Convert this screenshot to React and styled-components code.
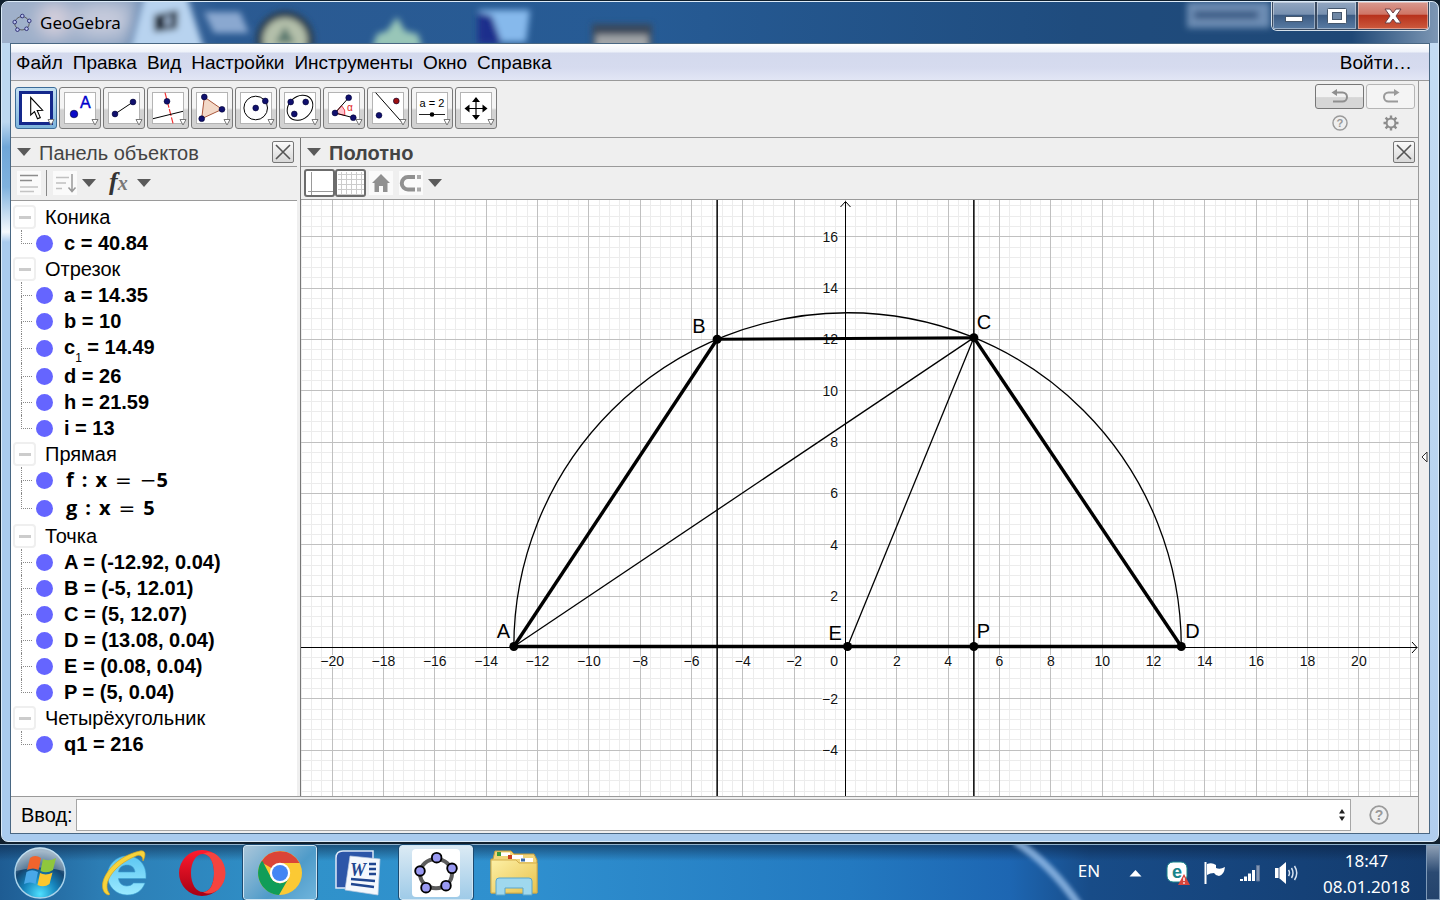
import React from "react";
import styled, { createGlobalStyle } from "styled-components";

const UNIT = 25.67;
const ORIGIN_X = 544.5;
const ORIGIN_Y = 447.5;
const CANVAS_W = 1117;
const CANVAS_H = 596;

const px = (x) => ORIGIN_X + x * UNIT;
const py = (y) => ORIGIN_Y - y * UNIT;
const crisp = (v) => Math.floor(v) + 0.5;

const range = (from, to, step) => {
  const out = [];
  for (let i = Math.ceil(from / step); i * step <= to; i++) out.push(i);
  return out;
};

const menus = ["Файл", "Правка", "Вид", "Настройки", "Инструменты", "Окно", "Справка"];

const groups = [
  { name: "Коника", items: [{ text: "c = 40.84" }] },
  {
    name: "Отрезок",
    items: [
      { text: "a = 14.35" },
      { text: "b = 10" },
      { text: "c", sub: "1", rest: " = 14.49", height: 29 },
      { text: "d = 26" },
      { text: "h = 21.59" },
      { text: "i = 13" },
    ],
  },
  {
    name: "Прямая",
    items: [
      { line: "f", sign: "−" },
      { line: "g", height: 30 },
    ],
  },
  {
    name: "Точка",
    items: [
      { text: "A = (-12.92, 0.04)" },
      { text: "B = (-5, 12.01)" },
      { text: "C = (5, 12.07)" },
      { text: "D = (13.08, 0.04)" },
      { text: "E = (0.08, 0.04)" },
      { text: "P = (5, 0.04)" },
    ],
  },
  { name: "Четырёхугольник", items: [{ text: "q1 = 216" }] },
];

const points = {
  A: { x: -12.92, y: 0.04, dx: -17, dy: -8 },
  B: { x: -5, y: 12.01, dx: -25, dy: -6 },
  C: { x: 5, y: 12.07, dx: 3, dy: -9 },
  D: { x: 13.08, y: 0.04, dx: 4, dy: -8 },
  E: { x: 0.08, y: 0.04, dx: -19, dy: -6 },
  P: { x: 5, y: 0.04, dx: 3, dy: -8 },
};

const Segment = ({ from, to, width }) => (
  <line
    x1={px(points[from].x)}
    y1={py(points[from].y)}
    x2={px(points[to].x)}
    y2={py(points[to].y)}
    stroke="#000"
    strokeWidth={width}
  />
);

const label = (n) => (n < 0 ? `−${-n}` : `${n}`);

const Graph = () => {
  const left = -ORIGIN_X / UNIT;
  const right = (CANVAS_W - ORIGIN_X) / UNIT;
  const bottom = (ORIGIN_Y - CANVAS_H) / UNIT;
  const top = ORIGIN_Y / UNIT;
  const radius = 13 * UNIT;
  const e = points.E;

  return (
    <Canvas viewBox={`0 0 ${CANVAS_W} ${CANVAS_H}`} preserveAspectRatio="xMidYMid slice">
      <g stroke="#ececec">
        {range(left, right, 0.4).map((i) => (
          <line key={`v${i}`} x1={crisp(px(i * 0.4))} x2={crisp(px(i * 0.4))} y1="0" y2={CANVAS_H} />
        ))}
        {range(bottom, top, 0.4).map((i) => (
          <line key={`h${i}`} y1={crisp(py(i * 0.4))} y2={crisp(py(i * 0.4))} x1="0" x2={CANVAS_W} />
        ))}
      </g>
      <g stroke="#c0c0c0">
        {range(left, right, 2).map((i) => (
          <line key={`v${i}`} x1={crisp(px(i * 2))} x2={crisp(px(i * 2))} y1="0" y2={CANVAS_H} />
        ))}
        {range(bottom, top, 2).map((i) => (
          <line key={`h${i}`} y1={crisp(py(i * 2))} y2={crisp(py(i * 2))} x1="0" x2={CANVAS_W} />
        ))}
      </g>
      <g stroke="#000" fill="none">
        <path d={`M0 ${ORIGIN_Y}H1116M1111 442l5 5.500l-5 5.500`} />
        <path d={`M${ORIGIN_X} 596V2M539.500 7l5 -5.500l5 5.500`} />
      </g>
      <g fontSize="14" fill="#111" stroke="#fff" strokeWidth="2" paintOrder="stroke">
        {range(-20, 20, 2).filter((i) => i !== 0).map((i) => (
          <text key={i} x={px(i * 2)} y="466" textAnchor="middle">{label(i * 2)}</text>
        ))}
        {[-4, -2, 2, 4, 6, 8, 10, 12, 14, 16].map((n) => (
          <text key={n} x="537" y={py(n) + 5} textAnchor="end">{label(n)}</text>
        ))}
        <text x="537" y="466" textAnchor="end">0</text>
      </g>
      <path d={`M${px(-5)} 0V596M${px(5)} 0V596`} stroke="#111" strokeWidth="1.6" />
      <path
        d={`M${px(e.x) - radius} ${py(e.y)}A${radius} ${radius} 0 0 1 ${px(e.x) + radius} ${py(e.y)}`}
        fill="none"
        stroke="#000"
        strokeWidth="1.3"
      />
      <Segment from="A" to="C" width="1.3" />
      <Segment from="E" to="C" width="1.3" />
      <Segment from="A" to="B" width="3.4" />
      <Segment from="B" to="C" width="3" />
      <Segment from="C" to="D" width="3.4" />
      <Segment from="A" to="D" width="3.4" />
      {Object.entries(points).map(([name, p]) => (
        <g key={name}>
          <circle cx={px(p.x)} cy={py(p.y)} r="4.500" />
          <text x={px(p.x) + p.dx} y={py(p.y) + p.dy} fontSize="20">{name}</text>
        </g>
      ))}
    </Canvas>
  );
};

const Dot = ({ x, y, r = 2.9, fill = "#10106e" }) => (
  <circle cx={x} cy={y} r={r} fill={fill} stroke="#000030" strokeWidth="0.6" />
);

// drawings for the tool buttons, in the 42px square of the button
const tools = [
  {
    name: "Перемещать",
    icon: <path d="M15.700 10.500V28l3.800-3.400 3 7.200 2.800-1.200-3.100-7.100 5.400-.3z" fill="#fff" stroke="#000" strokeWidth="1.1" />,
  },
  {
    name: "Точка",
    icon: (
      <>
        <Dot x={15} y={27} r={3.8} fill="#0a0ac8" />
        <text x="21" y="21" fontSize="16" fill="#0000cc" stroke="#0000cc" strokeWidth="0.4">A</text>
      </>
    ),
  },
  {
    name: "Отрезок",
    icon: (
      <>
        <path d="M12 27L30 15" stroke="#000" />
        <Dot x={12} y={27} />
        <Dot x={30} y={15} />
      </>
    ),
  },
  {
    name: "Перпендикуляр",
    icon: (
      <>
        <path d="M18 5.700L26 36.300" stroke="#f03030" strokeWidth="1.2" strokeDasharray="7 1.500" />
        <path d="M6 31.700L36 24.300" stroke="#000" />
        <Dot x={20} y={14.3} />
      </>
    ),
  },
  {
    name: "Многоугольник",
    icon: (
      <>
        <path d="M13.300 10L31 22.300 10.700 31.700z" fill="#f3d9c8" stroke="#a8553a" />
        <Dot x={13.3} y={10} />
        <Dot x={31} y={22.3} />
        <Dot x={10.7} y={31.7} />
      </>
    ),
  },
  {
    name: "Окружность",
    icon: (
      <>
        <circle cx="20.700" cy="21" r="11.800" fill="none" stroke="#000" />
        <Dot x={20.7} y={21} />
        <Dot x={30.3} y={14} />
      </>
    ),
  },
  {
    name: "Эллипс",
    icon: (
      <>
        <ellipse cx="21" cy="20.700" rx="14" ry="11.200" transform="rotate(-42 21 20.700)" fill="none" stroke="#000" />
        <Dot x={11.7} y={15} />
        <Dot x={26.7} y={15} />
        <Dot x={15.3} y={27} />
      </>
    ),
  },
  {
    name: "Угол",
    icon: (
      <>
        <path d="M12 26L18.500 18.700A10 10 0 0 1 21.800 28.400z" fill="#ffc4cc" stroke="#f04050" />
        <path d="M25.700 10.700L12 26L30.300 30.700" fill="none" stroke="#000" />
        <text x="24" y="24" fontSize="10" fill="#e02020">α</text>
        <Dot x={12} y={26} />
        <Dot x={25.7} y={10.7} />
        <Dot x={30.3} y={30.7} />
      </>
    ),
  },
  {
    name: "Отражение",
    icon: (
      <>
        <path d="M8.700 5.700L36 36.500" stroke="#000" />
        <Dot x={12} y={28.3} />
        <Dot x={29.3} y={14} fill="#9c1010" />
      </>
    ),
  },
  {
    name: "Ползунок",
    icon: (
      <>
        <text x="21" y="20" fontSize="11" textAnchor="middle">a = 2</text>
        <path d="M8 27.500H34" stroke="#222" />
        <circle cx="21" cy="27.500" r="2.300" />
      </>
    ),
  },
  {
    name: "Полотно",
    icon: (
      <>
        <path d="M21 10l-4 5h8zM21 33l-4-5h8zM9.500 21.500l5-4v8zM32.500 21.500l-5-4v8z" />
        <path d="M21 14V29M13 21.500H29" stroke="#000" strokeWidth="1.2" />
      </>
    ),
  },
];

const ring = [[17, 4], [28.5, 12], [24, 25], [9, 26.5], [4.5, 14]];

const GeoLogo = ({ size, thin }) => (
  <svg width={size} height={size} viewBox="0 0 33 31">
    <ellipse cx="16.500" cy="16" rx="12" ry="11" fill="none" stroke="#5c5c5c" strokeWidth={thin ? 1.6 : 3} />
    {ring.map(([x, y]) => (
      <circle
        key={x}
        cx={x}
        cy={y}
        r={thin ? 3 : 3.6}
        fill={thin ? "#b9c2ee" : "#9999f2"}
        stroke={thin ? "#20206a" : "#000"}
        strokeWidth="1.4"
      />
    ))}
  </svg>
);

const Down = () => (
  <svg width="14" height="8" viewBox="0 0 14 8">
    <path d="M0 0h14L7 8z" fill="#5a5a5a" />
  </svg>
);

const Cross = () => (
  <svg width="20" height="20" viewBox="0 0 20 20">
    <path d="M3 3L17 17M17 3L3 17" stroke="#555" strokeWidth="1.6" />
  </svg>
);

const Help = ({ size }) => (
  <svg width={size} height={size} viewBox="0 0 20 20">
    <circle cx="10" cy="10" r="8.800" fill="none" stroke="#9a9a9a" strokeWidth="1.800" />
    <text x="10" y="15" fontSize="14" fontWeight="bold" fill="#9a9a9a" textAnchor="middle">?</text>
  </svg>
);

const Gear = () => (
  <svg width="16" height="16" viewBox="0 0 16 16">
    <circle cx="8" cy="8" r="4.400" fill="none" stroke="#8c8c8c" strokeWidth="2" />
    <g stroke="#8c8c8c" strokeWidth="2.400">
      <path d="M8 3.500V.500M8 12.500v3M3.500 8h-3M12.500 8h3M4.800 4.800L2.600 2.600M11.200 11.200l2.200 2.200M4.800 11.200l-2.200 2.200M11.200 4.800l2.200-2.200" />
    </g>
  </svg>
);

const TitleBackdrop = () => (
  <Backdrop>
    <defs>
      <filter id="soft" x="-30%" y="-30%" width="160%" height="160%">
        <feGaussianBlur stdDeviation="3" />
      </filter>
      <filter id="softer" x="-50%" y="-50%" width="200%" height="200%">
        <feGaussianBlur stdDeviation="8" />
      </filter>
    </defs>
    <g filter="url(#softer)">
      <path d="M-20 -10H142L128 50H-20z" fill="#9fb0ca" />
      <circle cx="52" cy="18" r="16" fill="#d4cfdc" />
      <ellipse cx="100" cy="18" rx="28" ry="15" fill="#c6cbdc" />
    </g>
    <g filter="url(#soft)">
      <path d="M143 -8H184L203 50H128z" fill="#b8d3ef" />
      <path d="M152 13L176 8L175 27L152 30z" fill="#13202e" />
      <path d="M163 14l6-1v11l-6 1z" fill="#9db4d0" />
      <path d="M202 10L238 10L247 31H212z" fill="#8aa8d0" />
      <circle cx="283" cy="38" r="29" fill="#2b3d4d" />
      <circle cx="283" cy="38" r="22" fill="#b4c0aa" />
      <path d="M283 24l10 17h-20z" fill="#5c7a70" />
      <path d="M370 46l5-14 10-3 10-14 8 14 13 3 4 14z" fill="#98c6b8" />
      <path d="M476 8H528L524 40H486z" fill="#86b9ec" />
      <path d="M476 10l14 4 10 28h-24z" fill="#1e2f8c" />
      <path d="M590 22H650V50H590z" fill="#3a4a5c" />
      <path d="M594 33H646V50H594z" fill="#a0a4a8" />
    </g>
    <svg x="100%" overflow="visible">
      <g filter="url(#soft)">
        <path d="M-251 0H-168V26H-251z" fill="#6d8db4" />
        <path d="M-244 9H-180V17H-244z" fill="#3a5a84" />
      </g>
    </svg>
  </Backdrop>
);

const App = () => {
  return (
    <Desktop>
      <GlobalStyle />
      <Frame>
        <TitleBackdrop />
        <TitleBar>
          <GeoLogo size={20} thin />
          <Title>GeoGebra</Title>
          <WindowButtons>
            <WindowButton $width={44} aria-label="Свернуть">
              <svg width="18" height="12"><rect x="0.500" y="6.500" width="17" height="5" fill="#fff" stroke="#44566c" /></svg>
            </WindowButton>
            <WindowButton $width={41} aria-label="Развернуть">
              <svg width="20" height="16">
                <rect x="0.500" y="0.500" width="19" height="15" rx="1" fill="#fff" stroke="#44566c" />
                <rect x="5.500" y="4.500" width="9" height="7" fill="#6f87a4" stroke="#44566c" />
              </svg>
            </WindowButton>
            <WindowButton $width={72} $close aria-label="Закрыть">
              <svg width="18" height="16" viewBox="0 0 18 16">
                <path d="M1 1h5l3 4 3-4h5l-5 7 5 7h-5l-3-4-3 4H1l5-7z" fill="#fff" stroke="#6a4048" />
              </svg>
            </WindowButton>
          </WindowButtons>
        </TitleBar>
        <Client>
          <MenuBar>
            {menus.map((m) => (
              <MenuItem key={m}>{m}</MenuItem>
            ))}
            <SignIn>Войти…</SignIn>
          </MenuBar>
          <Body>
            <Main>
              <Toolbar>
                {tools.map((tool, i) => (
                  <ToolButton key={tool.name} $active={i === 0} aria-label={tool.name}>
                    <svg width="40" height="40" viewBox="1 1 40 40">
                      {i === 0 ? (
                        <rect x="5.500" y="5.500" width="31" height="31" fill="#fff" stroke="#14288c" strokeWidth="3" />
                      ) : (
                        <rect x="5.500" y="5.500" width="31" height="31" fill="#fff" stroke="#b4b4b4" />
                      )}
                      {tool.icon}
                      <path d="M33 32.500h6L36 38z" fill="#fff" stroke="#777" />
                    </svg>
                  </ToolButton>
                ))}
                <Corner>
                  <UndoButton aria-label="Отменить">
                    <svg width="18" height="15" viewBox="0 0 18 15">
                      <path d="M5 3.500h6.500a4 4 0 0 1 0 9H2" fill="none" stroke="#8e8e8e" strokeWidth="2" />
                      <path d="M6 0v7L0.500 3.500z" fill="#8e8e8e" />
                    </svg>
                  </UndoButton>
                  <UndoButton disabled aria-label="Повторить">
                    <svg width="18" height="15" viewBox="0 0 18 15">
                      <path d="M13 3.500H6.500a4 4 0 0 0 0 9H16" fill="none" stroke="#9a9a9a" strokeWidth="2" />
                      <path d="M12 0v7l5.500-3.500z" fill="#9a9a9a" />
                    </svg>
                  </UndoButton>
                  <PlainButton aria-label="Помощь"><Help size={16} /></PlainButton>
                  <PlainButton aria-label="Параметры"><Gear /></PlainButton>
                </Corner>
              </Toolbar>
              <Panels>
                <ObjectPanel>
                  <PanelHeader>
                    <Down />
                    <PanelTitle>Панель объектов</PanelTitle>
                    <CloseButton aria-label="Закрыть панель"><Cross /></CloseButton>
                  </PanelHeader>
                  <AlgebraBar>
                    <PlainButton aria-label="Вспомогательные объекты">
                      <svg width="24" height="24">
                        <rect width="24" height="24" fill="#fafafa" />
                        <path d="M3 4.500H21M3 9.500H15" stroke="#8c8c8c" strokeWidth="1.500" />
                        <path d="M3 16H21M3 20.500H17" stroke="#c4c4c4" strokeWidth="1.500" />
                      </svg>
                    </PlainButton>
                    <Separator />
                    <PlainButton aria-label="Сортировка">
                      <svg width="24" height="24">
                        <rect width="24" height="24" fill="#fafafa" />
                        <path d="M3 6.500H16M3 12H13M3 17.500H9" stroke="#c0c0c0" strokeWidth="1.500" />
                        <path d="M19 3V20M15.500 16.500L19 20.500L22.500 16.500" fill="none" stroke="#999" strokeWidth="1.500" />
                      </svg>
                    </PlainButton>
                    <Down />
                    <Fx>f<small>x</small></Fx>
                    <Down />
                  </AlgebraBar>
                  <Tree>
                    {groups.map((group) => (
                      <li key={group.name}>
                        <GroupRow>
                          <Toggle aria-label={`Свернуть ${group.name}`} />
                          {group.name}
                        </GroupRow>
                        <ul>
                          {group.items.map((item, i) => (
                            <Item key={i} $height={item.height}>
                              <Branch $last={i === group.items.length - 1} />
                              <Marble aria-label="Показать или скрыть" />
                              {item.line ? (
                                <Formula>
                                  <span>{item.line}</span>
                                  <span>:</span>
                                  <span>x</span>
                                  <Operator>=</Operator>
                                  <span>
                                    {item.sign && <Operator>{item.sign}</Operator>}5
                                  </span>
                                </Formula>
                              ) : (
                                <Value>
                                  {item.text}
                                  {item.sub && <sub>{item.sub}</sub>}
                                  {item.rest}
                                </Value>
                              )}
                            </Item>
                          ))}
                        </ul>
                      </li>
                    ))}
                  </Tree>
                </ObjectPanel>
                <GraphPanel>
                  <PanelHeader>
                    <Down />
                    <PanelTitle $bold>Полотно</PanelTitle>
                    <CloseButton aria-label="Закрыть полотно"><Cross /></CloseButton>
                  </PanelHeader>
                  <GraphBar>
                    <ViewButton aria-label="Оси">
                      <svg width="29" height="25"><path d="M5.500 1V24M2 20.500H27" stroke="#999" /></svg>
                    </ViewButton>
                    <ViewButton aria-label="Сетка">
                      <svg width="29" height="25">
                        <path d="M4.500 1V24M9.500 1V24M14.500 1V24M19.500 1V24M24.500 1V24M1 3.500H28M1 8.500H28M1 13.500H28M1 18.500H28M1 23.500H28" stroke="#ccc" />
                      </svg>
                    </ViewButton>
                    <HomeButton aria-label="Стандартный вид">
                      <svg width="24" height="24">
                        <rect width="24" height="24" fill="#fafafa" />
                        <path d="M12 3L21 12H18.500V21H14V15H10V21H5.500V12H3z" fill="#909090" />
                      </svg>
                    </HomeButton>
                    <PlainButton aria-label="Привязка">
                      <svg width="24" height="24">
                        <rect width="24" height="24" fill="#fafafa" />
                        <path d="M16 6H9a6 6 0 0 0 0 12.500H16" fill="none" stroke="#909090" strokeWidth="4" />
                        <path d="M18 4h4v4h-4zM18 16.500h4v4h-4z" fill="#aaa" />
                      </svg>
                    </PlainButton>
                    <Down />
                  </GraphBar>
                  <Graph />
                </GraphPanel>
              </Panels>
              <InputBar>
                <label htmlFor="command">Ввод:</label>
                <Field>
                  <input id="command" type="text" />
                  <PlainButton aria-label="История ввода">
                    <svg width="6" height="14"><path d="M0 5.500L3 1l3 4.500zM0 8.500h6L3 13z" fill="#222" /></svg>
                  </PlainButton>
                </Field>
                <PlainButton aria-label="Справка по вводу"><Help size={20} /></PlainButton>
              </InputBar>
            </Main>
            <SideStrip>
              <PlainButton aria-label="Показать боковую панель">
                <svg width="7" height="12"><path d="M6 1V11L1 6z" fill="#fff" stroke="#333" /></svg>
              </PlainButton>
            </SideStrip>
          </Body>
        </Client>
      </Frame>
      <Taskbar>
        <Streak viewBox="0 0 100 56">
          <defs>
            <filter id="glow" x="-20%" y="-20%" width="140%" height="140%">
              <feGaussianBlur stdDeviation="2" />
            </filter>
          </defs>
          <path d="M14 -4Q50 18 80 62" fill="none" stroke="#a9cdf5" strokeWidth="8" filter="url(#glow)" />
        </Streak>
        <StartButton aria-label="Пуск">
          <svg width="54" height="54" viewBox="0 0 54 54">
            <defs>
              <radialGradient id="orb" cx="50%" cy="92%" r="85%">
                <stop offset="0" stopColor="#4fe0ff" />
                <stop offset="0.400" stopColor="#1583bb" />
                <stop offset="0.700" stopColor="#15456f" />
                <stop offset="1" stopColor="#7c9ab2" />
              </radialGradient>
            </defs>
            <circle cx="27" cy="27" r="25" fill="url(#orb)" stroke="#a9d2ea" strokeWidth="1.500" />
            <path d="M3 25A24 24 0 0 1 51 25Q27 18 3 25z" fill="#fff" opacity="0.300" />
            <path d="M17 12Q22 8 28 12L25.500 24Q20 21 14 24z" fill="#f0642c" />
            <path d="M30 13Q36 16 43 12L40 24Q34 28 27.500 25z" fill="#8fc63d" />
            <path d="M13.500 26Q19 22.500 25 26L22.500 38Q17 35 11 38z" fill="#49a8e8" />
            <path d="M27 27Q33 30 39.500 26.500L36.500 38Q31 42 24.500 39z" fill="#fcc72f" />
          </svg>
        </StartButton>
        <TaskButton aria-label="Internet Explorer">
          <svg width="48" height="48" viewBox="0 0 48 48">
            <defs>
              <linearGradient id="ie" x1="0" y1="0" x2="0" y2="1">
                <stop offset="0" stopColor="#5cc6f2" />
                <stop offset="1" stopColor="#9beaff" />
              </linearGradient>
            </defs>
            <path
              d="M46 29.500H18.500C19 34 22 37 27 37Q31.500 37 33.500 34H45C42 42 36 46 27 46A19.500 19.500 0 0 1 27 7C38 7 47 15 46 29.500zM35 23C34.500 18.500 31.500 16 27 16S19 18.500 18.500 23z"
              fill="url(#ie)"
              fillRule="evenodd"
              stroke="#3d9fd2"
              strokeWidth="0.600"
            />
            <path d="M5 44C-4 34 12 8 40 2C46 1 46 6 43 12C43 7 40 5 36 7C14 16 2 34 9 44C11 46 8 47 5 44z" fill="#f6d33c" stroke="#d7a51e" strokeWidth="0.700" />
          </svg>
        </TaskButton>
        <TaskButton aria-label="Opera">
          <svg width="48" height="48" viewBox="0 0 48 48">
            <defs>
              <linearGradient id="opera" x1="0" y1="0" x2="0" y2="1">
                <stop offset="0" stopColor="#ff1b2d" />
                <stop offset="1" stopColor="#a70014" />
              </linearGradient>
            </defs>
            <path d="M24 1A23 23 0 0 0 24 47A23 23 0 0 0 24 1zM25 5C32 5 36 13 36 24S32 43 25 43S13 35 13 24S18 5 25 5z" fill="url(#opera)" fillRule="evenodd" />
            <path d="M25 5C32 5 36 13 36 24S32 43 25 43C30 46 36 44 40 41A23 23 0 0 0 40 7C36 3 30 2 25 5z" fill="#f5443f" />
          </svg>
        </TaskButton>
        <TaskButton $open aria-label="Chrome">
          <svg width="44" height="44" viewBox="0 0 44 44">
            <circle cx="22" cy="22" r="22" fill="#fbc934" />
            <path d="M22 22L3 11A22 22 0 0 1 41.500 12H22z" fill="#db4437" />
            <path d="M3 11A22 22 0 0 0 21 44L30.500 27.500A10 10 0 0 1 13 26.500L4.500 10z" fill="#109d58" />
            <circle cx="22" cy="22" r="10.200" fill="#fff" />
            <circle cx="22" cy="22" r="8" fill="#4385f4" />
          </svg>
        </TaskButton>
        <TaskButton aria-label="Word">
          <svg width="46" height="46" viewBox="0 0 46 46">
            <path d="M8 1H38V38H1V8Q1 1 8 1z" fill="#2c56a8" stroke="#dce8f8" strokeWidth="1.500" />
            <path d="M15 6L45 9L43 45L10 40z" fill="#f4f8fd" stroke="#b9c9df" strokeWidth="0.700" />
            <text x="15" y="26" fontSize="18" fontWeight="bold" fontFamily="Liberation Serif, serif" fontStyle="italic" fill="#1f4690">W</text>
            <path d="M34 14H41M34 19H41M34 24H41M16 29L40 31M16 34L39 37" stroke="#1f4690" strokeWidth="2.500" />
          </svg>
        </TaskButton>
        <TaskButton $open $current aria-label="GeoGebra">
          <LogoTile><GeoLogo size={44} /></LogoTile>
        </TaskButton>
        <TaskButton aria-label="Проводник">
          <svg width="48" height="46" viewBox="0 0 48 46">
            <defs>
              <linearGradient id="folder" x1="0" y1="0" x2="1" y2="1">
                <stop offset="0" stopColor="#fdf0a6" />
                <stop offset="1" stopColor="#e8c24c" />
              </linearGradient>
            </defs>
            <path d="M3 9L5 1H21L24 4H44L47 10V43H1V9z" fill="#f0d57a" stroke="#c19a3a" />
            <path d="M7 2.500H20V6H7zM18 5H33V9H18zM30 8H43V12H30z" fill="#fff" />
            <path d="M7 2h4v4H7z" fill="#3a9a3a" />
            <path d="M18 5h4v4h-4z" fill="#c84020" />
            <path d="M31 8.500h4v3h-4z" fill="#3a6aa8" />
            <path d="M1 10H26L29 13H47V43H1z" fill="url(#folder)" stroke="#d3ae4c" />
            <path d="M6 45V31Q6 28 9 28H39Q42 28 42 31V45H33V38H15V45z" fill="#9fd8ee" stroke="#5ba6cc" />
          </svg>
        </TaskButton>
        <Tray>
          <Language>EN</Language>
          <svg width="13" height="8"><path d="M0.500 7.500L6.500 1l6 6.500z" fill="#fff" /></svg>
          <TrayIcons>
            <svg width="24" height="24" viewBox="0 0 24 24">
              <rect x="1" y="1" width="20" height="20" rx="6" fill="#fff" stroke="#18858a" />
              <EsetLetter x="11" y="17" textAnchor="middle">e</EsetLetter>
              <path d="M18 13L24 24H12z" fill="#d8453c" />
              <path d="M18 16.500V20M18 21.300V22.800" stroke="#fff" strokeWidth="1.500" />
            </svg>
            <svg width="22" height="24" viewBox="0 0 22 24">
              <path d="M1.500 1V23" stroke="#fff" strokeWidth="2" />
              <path d="M3 3Q8 1 12 4V7Q16 9 21 6Q20 14 15 15Q12 15 10 12Q6 12 3 14z" fill="#fff" />
            </svg>
            <svg width="21" height="18" viewBox="0 0 21 18">
              <path d="M0 15h3v2H0zM4 12.500h3V17H4zM8 9.500h3V17H8zM12 6h3v11h-3z" fill="#fff" />
              <path d="M16.500 1.500h3V17h-3z" fill="#8296b4" stroke="#5d7598" />
            </svg>
            <svg width="24" height="22" viewBox="0 0 24 22">
              <path d="M0 6H4L11 0V22L4 16H0z" fill="#fff" />
              <path d="M4 6V16" stroke="#34507c" />
              <path d="M13.500 8Q15.500 11 13.500 14M16.500 6Q19.500 11 16.500 16M19.500 4Q24 11 19.500 18" fill="none" stroke="#d7e3f2" strokeWidth="1.500" />
            </svg>
          </TrayIcons>
          <Clock>
            <time>18:47</time>
            <time>08.01.2018</time>
          </Clock>
          <ShowDesktop aria-label="Показать рабочий стол" />
        </Tray>
      </Taskbar>
    </Desktop>
  );
};

export default App;

const GlobalStyle = createGlobalStyle`
  * {
    box-sizing: border-box;
  }

  body {
    margin: 0;
    font-family: "Liberation Sans", Arial, sans-serif;
    color: #000;
  }

  button {
    padding: 0;
    font: inherit;
    cursor: pointer;
  }

  ul {
    margin: 0;
    padding: 0;
    list-style: none;
  }

  svg {
    display: block;
    flex-shrink: 0;
  }
`;

const Desktop = styled.div`
  display: flex;
  flex-direction: column;
  height: 100vh;
  background-color: #10202e;
`;

const Frame = styled.div`
  position: relative;
  flex: 1;
  min-height: 0;
  display: flex;
  flex-direction: column;
  margin: 1px 1px 2px;
  padding: 0 8px 7px;
  border: 1px solid #dcebf8;
  border-radius: 7px;
  overflow: hidden;
  background:
    linear-gradient(to right, #8ea5c4 0, #2b5a92 15%, #265b95 45%, #1f4c7e 75%, #1f4876 94%, #7d97b4 100%) 0 0 / 100% 41px no-repeat,
    linear-gradient(to bottom, #c4dcf3, #b0cdee) 100% 41px / 8px 100% no-repeat,
    linear-gradient(to bottom, #bdd8f0 41px, #bdd8f0 120px, #6fa6d8 145px, #7fb2de 185px, #f4f9fd 230px, #a9cbee 240px, #a9cbee 100%);
`;

const Backdrop = styled.svg`
  position: absolute;
  left: 0;
  top: 0;
  width: 100%;
  height: 41px;
`;

const TitleBar = styled.div`
  position: relative;
  display: flex;
  align-items: center;
  gap: 8px;
  height: 41px;
  padding-left: 2px;
`;

const Title = styled.span`
  flex: 1;
  font-family: "Noto Sans", "Open Sans", sans-serif;
  font-size: 17px;
`;

const WindowButtons = styled.div`
  align-self: flex-start;
  display: flex;
  border: 1px solid #d5e0ea;
  border-top: none;
  border-radius: 0 0 6px 6px;
  overflow: hidden;
`;

const WindowButton = styled.button`
  display: flex;
  align-items: center;
  justify-content: center;
  width: ${(props) => props.$width}px;
  height: 28px;
  border: 1px solid #3a4a60;
  border-top: none;
  box-shadow: inset 0 0 0 1px rgba(255, 255, 255, 0.4);
  background: ${(props) =>
    props.$close
      ? "linear-gradient(#d99a90 0, #cf7566 45%, #b8321c 50%, #cc5a3e 100%)"
      : "linear-gradient(#93a7c1 0, #7790b0 45%, #3d5c84 50%, #587ba3 100%)"};
`;

const Client = styled.div`
  position: relative;
  flex: 1;
  min-height: 0;
  display: flex;
  flex-direction: column;
  border: 1px solid #496783;
  background-color: #efefef;
`;

const MenuBar = styled.nav`
  display: flex;
  align-items: center;
  gap: 10px;
  height: 37px;
  padding: 2px 17px 0 5px;
  border-bottom: 1px solid #9a9a9a;
  background: linear-gradient(#fff 0, #eef2fa 8px, #d3d9ed 9px, #d6dbef 24px, #e2e6f5 100%);
`;

const MenuItem = styled.button`
  border: none;
  background: none;
  font-size: 19px;
`;

const SignIn = styled(MenuItem)`
  margin-left: auto;
`;

const Body = styled.div`
  flex: 1;
  min-height: 0;
  display: flex;
`;

const Main = styled.div`
  flex: 1;
  min-width: 0;
  display: flex;
  flex-direction: column;
  border-right: 1px solid #9a9a9a;
`;

const SideStrip = styled.div`
  width: 10px;
  display: flex;
  align-items: center;
  justify-content: center;
`;

const Toolbar = styled.div`
  display: flex;
  gap: 2px;
  height: 57px;
  padding: 3px 3px 0 4px;
  border-bottom: 1px solid #9a9a9a;
`;

const ToolButton = styled.button`
  width: 42px;
  height: 42px;
  margin-top: 3px;
  border: 1px solid ${(props) => (props.$active ? "#3c6c98" : "#7a7a7a")};
  border-radius: 3px;
  background: ${(props) =>
    props.$active ? "linear-gradient(#c4e0f2, #7db4dc)" : "linear-gradient(#f4f4f4 50%, #d2d2d2 55%)"};
`;

const Corner = styled.div`
  margin-left: auto;
  display: grid;
  grid-template-columns: 49px 49px;
  grid-template-rows: 25px 28px;
  gap: 0 2px;
`;

const UndoButton = styled.button`
  display: flex;
  align-items: center;
  justify-content: center;
  border: 1px solid #777;
  border-radius: 3px;
  background: linear-gradient(#f2f2f2 50%, #d6d6d6 55%);

  &:disabled {
    border-color: #b5b5b5;
    background: #f4f4f4;
  }
`;

const PlainButton = styled.button`
  display: flex;
  align-items: center;
  justify-content: center;
  border: none;
  background: none;
`;

const Panels = styled.div`
  flex: 1;
  min-height: 0;
  display: flex;
  gap: 3px;
`;

const ObjectPanel = styled.section`
  width: 286px;
  display: flex;
  flex-direction: column;
`;

const GraphPanel = styled.section`
  flex: 1;
  min-width: 0;
  display: flex;
  flex-direction: column;
  border-left: 1px solid #777;
`;

const PanelHeader = styled.header`
  display: flex;
  align-items: center;
  gap: 8px;
  height: 29px;
  padding: 0 3px 0 6px;
  border-bottom: 1px solid #9a9a9a;
`;

const PanelTitle = styled.h2`
  flex: 1;
  margin: 0;
  padding-top: 2px;
  font-size: 20px;
  font-weight: ${(props) => (props.$bold ? "bold" : "normal")};
  color: #444;
`;

const CloseButton = styled.button`
  display: flex;
  width: 22px;
  height: 22px;
  border: 1px solid #777;
  border-radius: 2px;
  background: linear-gradient(#fafafa, #d8d8d8);
`;

const AlgebraBar = styled.div`
  display: flex;
  align-items: center;
  gap: 5px;
  height: 34px;
  padding: 0 6px 2px;
  border-bottom: 1px solid #9a9a9a;
`;

const Separator = styled.span`
  width: 1px;
  height: 26px;
  margin-right: 1px;
  background-color: #888;
`;

const Fx = styled.button`
  margin: 0 4px 0 8px;
  border: none;
  background: none;
  font-family: "Liberation Serif", serif;
  font-size: 26px;
  line-height: 26px;
  font-style: italic;
  font-weight: bold;
  color: #333;

  small {
    font-size: 20px;
    color: #777;
  }
`;

const Tree = styled.ul`
  flex: 1;
  padding-top: 3px;
  background-color: #fff;
  overflow: hidden;
`;

const GroupRow = styled.div`
  display: flex;
  align-items: center;
  gap: 9px;
  height: 26px;
  padding-left: 2px;
  font-size: 20px;
`;

const Toggle = styled.button`
  display: flex;
  align-items: center;
  justify-content: center;
  width: 23px;
  height: 24px;
  border: 2px solid #efefef;
  border-radius: 4px;
  background-color: #fff;

  &::before {
    content: "";
    width: 12px;
    height: 3px;
    background-color: #ccc;
  }
`;

const Item = styled.li`
  display: flex;
  align-items: center;
  height: ${(props) => props.$height || 26}px;
  padding-left: 10px;
`;

const Branch = styled.span`
  align-self: stretch;
  width: 11px;
  display: flex;
  flex-direction: column;

  &::before {
    content: "";
    flex: 1;
    border-left: 1px dotted #888;
    border-bottom: 1px dotted #888;
  }

  &::after {
    content: "";
    flex: 1;
    border-left: 1px dotted ${(props) => (props.$last ? "transparent" : "#888")};
  }
`;

const Marble = styled.button`
  width: 17px;
  height: 17px;
  margin: 0 11px 0 4px;
  border: none;
  border-radius: 50%;
  background-color: #6565ff;
`;

const Value = styled.span`
  font-size: 20px;
  font-weight: bold;
  white-space: pre;

  sub {
    font-size: 12px;
    font-weight: normal;
    line-height: 8px;
    vertical-align: -8px;
  }
`;

const Formula = styled.span`
  display: flex;
  align-items: baseline;
  gap: 8px;
  padding-left: 2px;
  font-family: "Open Sans", sans-serif;
  font-size: 20px;
  line-height: 24px;
  font-weight: bold;
`;

const Operator = styled.span`
  font-family: "DejaVu Sans", sans-serif;
  font-weight: normal;
`;

const GraphBar = styled.div`
  display: flex;
  align-items: center;
  gap: 5px;
  height: 33px;
  padding: 0 3px;
  border-bottom: 1px solid #9a9a9a;
`;

const ViewButton = styled.button`
  width: 31px;
  height: 28px;
  border: 2px solid #6c6c6c;
  border-radius: 3px;
  background-color: #fff;
  overflow: hidden;

  & + & {
    margin-left: -5px;
  }
`;

const HomeButton = styled(PlainButton)`
  margin: 0 1px 0 -2px;
`;

const Canvas = styled.svg`
  flex: 1;
  width: 100%;
  min-height: 0;
  background-color: #fff;
`;

const InputBar = styled.div`
  display: flex;
  align-items: center;
  height: 37px;
  padding: 0 29px 0 10px;
  border-top: 1px solid #9a9a9a;
  font-size: 20px;

  label {
    width: 55px;
  }
`;

const Field = styled.div`
  flex: 1;
  display: flex;
  height: 32px;
  margin-right: 18px;
  padding-right: 5px;
  border: 1px solid #a6a6a6;
  background-color: #fff;

  input {
    flex: 1;
    border: none;
    outline: none;
    background: none;
    font: inherit;
  }
`;

const Taskbar = styled.footer`
  position: relative;
  display: flex;
  align-items: stretch;
  gap: 4px;
  height: 56px;
  padding-left: 13px;
  border-top: 1px solid #8fb0cb;
  background:
    linear-gradient(rgba(10, 30, 60, 0.55), rgba(10, 30, 60, 0) 16px),
    linear-gradient(to right, #1e5c93 0, #2c7db4 100px, #3092ca 300px, #2f90cf 520px, #2379c0 850px, #1d66b2 1010px, #184c88 1090px, #133a6c 100%);
`;

const Streak = styled.svg`
  position: absolute;
  left: 1000px;
  top: 0;
  width: 100px;
  height: 55px;
  opacity: 0.7;
`;

const StartButton = styled.button`
  width: 54px;
  margin-right: 16px;
  border: none;
  background: none;
`;

const TaskButton = styled.button`
  display: flex;
  align-items: center;
  justify-content: center;
  width: 74px;
  border: 1px solid ${(props) => (props.$open ? "#cfe5f3" : "transparent")};
  border-radius: 3px;
  outline: ${(props) => (props.$open ? "1px solid #1c4a70" : "none")};
  background: ${(props) => {
    if (props.$current) return "linear-gradient(#dbeaf4, #9fcbe8)";
    return props.$open ? "linear-gradient(135deg, #a9c6da, #4f9bc9 60%, #6fb4dc)" : "none";
  }};
`;

const LogoTile = styled.span`
  display: flex;
  align-items: center;
  justify-content: center;
  width: 48px;
  height: 48px;
  border-radius: 4px;
  background-color: #fff;
`;

const Tray = styled.div`
  margin-left: auto;
  display: flex;
  align-items: center;
  gap: 24px;
  font-family: "Noto Sans", "Open Sans", sans-serif;
  font-size: 17px;
  color: #fff;
`;

const Language = styled.span`
  margin-right: 5px;
  padding-bottom: 4px;
`;

const EsetLetter = styled.text`
  font-family: "Liberation Sans", sans-serif;
  font-size: 18px;
  font-weight: bold;
  fill: #18858a;
`;

const TrayIcons = styled.div`
  display: flex;
  align-items: center;
  gap: 14px;
`;

const Clock = styled.div`
  display: flex;
  flex-direction: column;
  align-items: center;
  padding-top: 2px;
  line-height: 26px;
`;

const ShowDesktop = styled.button`
  align-self: stretch;
  width: 14px;
  margin-left: -8px;
  border: 1px solid #7f9ab8;
  background: linear-gradient(#8d9fb5, #2b4a72 50%, #24436c);
`;
